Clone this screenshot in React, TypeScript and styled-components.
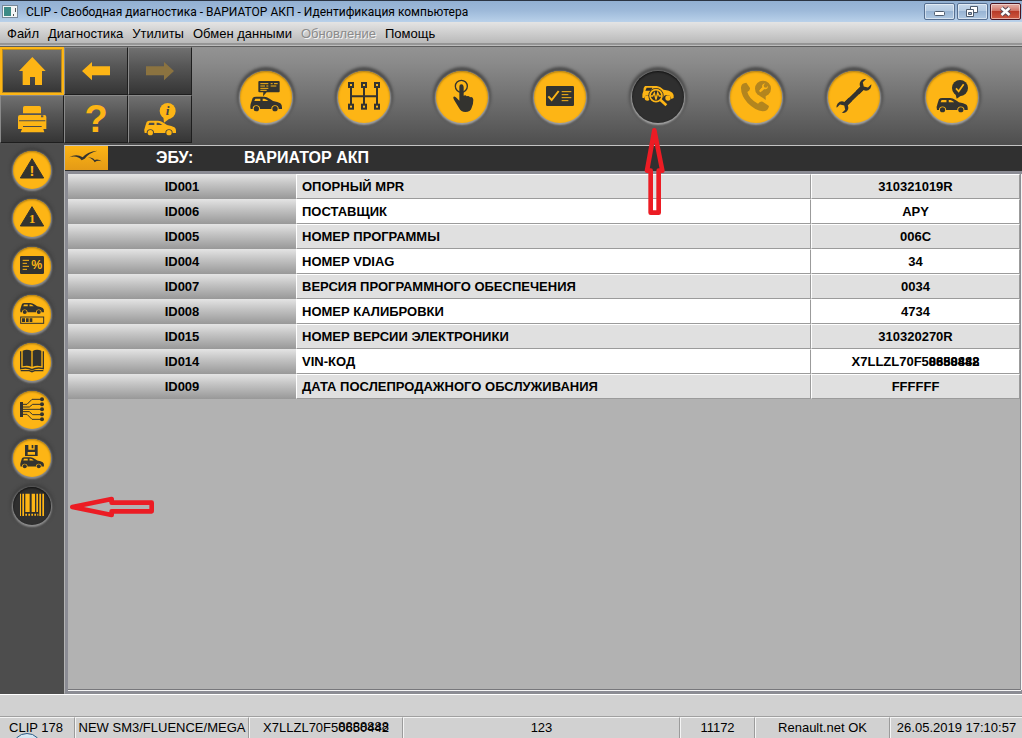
import React from "react";
import styled, { createGlobalStyle, css } from "styled-components";

const amber = "#fdb515";
const ink = "#33332f";
const sans = `"Liberation Sans", Arial, sans-serif`;

const GlobalStyle = createGlobalStyle`
  * { box-sizing: border-box; }
  body { margin: 0; font-family: ${sans}; font-size: 13px; color: #000; background: #d1d1d1; }
  button { font: inherit; color: inherit; padding: 0; margin: 0; border: 0; background: none; cursor: pointer; }
`;

/* ---------- layout ---------- */

const Window = styled.div`
  position: relative;
  display: flex;
  flex-direction: column;
  min-height: 100vh;
  overflow: hidden;
`;

const TitleBar = styled.header`
  display: flex;
  align-items: center;
  height: 22px;
  padding: 0 1px 0 2px;
  border-top: 1px solid #2b3442;
  background: linear-gradient(#92b0d2, #9db9d9 45%, #b9d1ea);
`;

const AppIcon = styled.svg`
  width: 16px;
  height: 14px;
  margin-right: 8px;
`;

const Title = styled.h1`
  flex: 1;
  margin: 0;
  font: 400 12px/20px Roboto, "Open Sans", sans-serif;
`;

const WindowButtons = styled.div`
  display: flex;
  gap: 2px;
`;

const WindowButton = styled.button<{ $close?: boolean }>`
  width: 31px;
  height: 17px;
  border: 1px solid ${(p) => (p.$close ? "#4a1420" : "#566f90")};
  border-radius: 2px;
  box-shadow: inset 0 0 0 1px rgba(255, 255, 255, 0.5);
  background: ${(p) =>
    p.$close
      ? "linear-gradient(#dfa197 0 15%, #cf6e60 48%, #b83a28 50%, #cf5a43)"
      : "linear-gradient(#c5d7ea, #b3c9e1 48%, #98b4d3 50%, #afc8e2)"};
  svg { display: block; width: 29px; height: 15px; }
`;

const MenuBar = styled.nav`
  display: flex;
  gap: 9px;
  height: 25px;
  padding: 0 7px;
  border-bottom: 1px solid #5e5e5e;
  background: linear-gradient(#e4e4e4, #b9b9b9 21px, #707070 22px, #bdbdbd 23px);
`;

const MenuItem = styled.button`
  font-size: 13px;
  line-height: 24px;
  &:disabled { color: #8b8b8b; text-shadow: 1px 1px 0 #f3f3f3; }
`;

const Toolbar = styled.div`
  display: flex;
  height: 98px;
  background: linear-gradient(#939393, #8b8b8b 15%, #4e4e4e);
`;

const ToolGrid = styled.div`
  display: grid;
  grid-template-columns: repeat(3, 64px);
  grid-template-rows: 48px 48px;
`;

const ToolButton = styled.button<{ $selected?: boolean }>`
  border: 1px solid;
  border-color: #8a8a8a #1e1e1e #1e1e1e #8a8a8a;
  background: linear-gradient(#707070, #565656 40%, #353535);
  color: ${amber};
  svg { display: block; width: 64px; height: 48px; margin: -1px; }
  ${(p) =>
    p.$selected &&
    css`
      border: 2px solid ${amber};
      box-shadow: inset 0 0 0 1px #b88a20;
      svg { margin: -2px; }
    `}
`;

const QuestionMark = styled.span`
  display: block;
  font-size: 38px;
  font-weight: 700;
  line-height: 46px;
`;

const ModeList = styled.div`
  display: flex;
  gap: 46px;
  align-items: flex-start;
  padding: 24px 0 0 48px;
`;

const RoundButton = styled.button<{ $size: number; $active?: boolean; $muted?: boolean }>`
  flex: none;
  width: ${(p) => p.$size}px;
  height: ${(p) => p.$size}px;
  border-radius: 50%;
  background: ${(p) => (p.$active ? "#2f2f2f" : amber)};
  color: ${(p) => (p.$active ? amber : p.$muted ? "#b3851e" : ink)};
  box-shadow:
    0 1px 2px 1px ${(p) => (p.$size > 45 ? "#a4a4a4" : "#8e8e8e")},
    0 -1px 3px 3px ${(p) => (p.$size > 45 ? "#4a4a4a" : "#424242")},
    inset 0 1px 2px 0 ${(p) => (p.$active ? "#111" : "#a87912")};
  svg { display: block; width: 100%; height: 100%; }
`;

const Body = styled.div`
  display: flex;
  flex: 1;
`;

const Sidebar = styled.aside`
  display: flex;
  flex-direction: column;
  align-items: center;
  gap: 10px;
  width: 64px;
  padding-top: 6px;
  background: #4d4d4d;
`;

const Panel = styled.main`
  flex: 1;
  display: flex;
  flex-direction: column;
  border-left: 1px solid #b4b4b4;
  border-top: 1px solid #c3c3c3;
  border-bottom: 1px solid #8b8c92;
  background: #8b8c94;
`;

const EcuBar = styled.div`
  display: flex;
  align-items: flex-start;
  height: 25px;
  background: #303030;
  color: #fff;
  font-size: 16px;
  font-weight: 700;
  line-height: 23px;
`;

const Brand = styled.svg`
  width: 43px;
  height: 24px;
  background: linear-gradient(${amber}, #e49a16);
`;

const EcuLabel = styled.span`
  width: 88px;
  margin-left: 48px;
`;

const Sheet = styled.div`
  flex: 1;
  margin: 3px 1px 3px 3px;
  border-right: 1px solid #8b8c92;
  border-bottom: 1px solid #77777b;
  background: #b2b2b2;
  box-shadow: 0 1px 0 #f4f4f4, 1px 0 0 #f4f4f4;
`;

const IdTable = styled.table`
  width: 100%;
  table-layout: fixed;
  border-collapse: separate;
  border-spacing: 0;
  font-weight: 700;
  line-height: 23px;
  th, td { height: 25px; padding: 0; }
`;

const CodeCell = styled.th`
  width: 228px;
  background: linear-gradient(#e4e4e4, #c4c4c4 40%, #989898);
  text-align: center;
`;

const Cell = styled.td<{ $shade: boolean; $value?: boolean }>`
  width: ${(p) => (p.$value ? "209px" : "auto")};
  border: 1px solid;
  border-color: #fff #9b9b9b #9b9b9b #fff;
  background: ${(p) => (p.$shade ? "#e0e0e0" : "#fff")};
  text-align: ${(p) => (p.$value ? "center" : "left")};
  && { padding-left: ${(p) => (p.$value ? "0" : "5px")}; }
`;

const Message = styled.div`
  height: 23px;
  border-top: 1px solid #fff;
  border-bottom: 1px solid #a0a0a0;
  background: #d1d1d1;
`;

const StatusBar = styled.footer`
  display: grid;
  grid-template-columns: 75px 174px 154px 1fr 75px 135px 132px;
  height: 21px;
  background: #d1d1d1;
`;

const StatusCell = styled.div`
  border-top: 1px solid #f4f4f4;
  border-left: 1px solid #f4f4f4;
  border-right: 1px solid #9b9b9b;
  line-height: 19px;
  text-align: center;
  white-space: nowrap;
  &:first-child { padding-right: 2px; border-left: 0; }
  &:last-child { border-right: 0; }
`;

/* ---------- overlays ---------- */

const Vin = styled.span`
  position: relative;
`;

const VinMask = styled.span<{ $lift: number }>`
  position: absolute;
  right: 0;
  top: ${(p) => -p.$lift}px;
  line-height: normal;
`;

const UpArrow = styled.svg`
  position: absolute;
  left: 643px;
  top: 126px;
  width: 24px;
  height: 90px;
`;

const LeftArrow = styled.svg`
  position: absolute;
  left: 68px;
  top: 495px;
  width: 88px;
  height: 24px;
`;

const StartOrb = styled.div`
  position: absolute;
  left: 12px;
  bottom: -25px;
  width: 30px;
  height: 30px;
  border: 1px solid #2b5b86;
  border-radius: 50%;
  background: linear-gradient(#dcebf5, #8db9da);
`;

/* ---------- drawings ---------- */

const Car = ({ x, y, s = 1 }: { x: number; y: number; s?: number }) => (
  <g transform={`translate(${x} ${y}) scale(${s})`} fill="currentColor">
    <path
      fillRule="evenodd"
      d="M8 4Q11 0 18 0H42Q50 0 60 7L69 13Q84 15 91 20Q97 24 96 37H86A11 11 0 0 0 64 37H30A11 11 0 0 0 8 37H2Q-1 27 4 16ZM16 6L13 13H31V6ZM38 6V13H55Q48 7 43 6Z"
    />
    <circle cx="19" cy="36" r="8" />
    <circle cx="75" cy="36" r="8" />
  </g>
);

const Svg = ({ box = "0 0 156 156", children }: { box?: string; children: React.ReactNode }) => (
  <svg viewBox={box} fill="currentColor" aria-hidden="true">
    {children}
  </svg>
);

const toolBox = "0 0 192 144";
const sectionBox = "3 3 114 114";

const wrenchHead = "M-7 2V20H7V2Q19-3 18-16Q17-23 11-27V-13L0-6L-11-13V-27Q-17-23-18-16Q-19-3-7 2Z";

const modes: { label: string; active?: boolean; muted?: boolean; art: React.ReactNode }[] = [
  {
    label: "Автомобиль",
    art: (
      <>
        <path d="M58 30H116Q119 30 119 33V61Q119 64 116 64H80L69 76L70 64H58Q55 64 55 61V33Q55 30 58 30Z" />
        <path d="M61 38H85M92 38H98M102 38H113M61 45H75M79 45H85M92 45H109M61 52H85M61 58H80" stroke={amber} strokeWidth="3" />
        <Car x={30} y={77} />
      </>
    ),
  },
  {
    label: "Коробка передач",
    art: (
      <>
        <path d="M39 42V107M78 42V107M117 42V107M39 76H117" stroke="currentColor" strokeWidth="6" />
        {[39, 78, 117].flatMap((x) =>
          [42, 107].map((y) => (
            <rect key={`${x}-${y}`} x={x - 6} y={y - 6} width="12" height="12" fill={amber} stroke="currentColor" strokeWidth="6" />
          )),
        )}
      </>
    ),
  },
  {
    label: "Команды",
    art: (
      <>
        <circle cx="76" cy="46" r="18" fill="none" stroke="currentColor" strokeWidth="4" />
        <path d="M70 47Q70 40 76 40T83 47V74Q89 71 92 76Q98 73 102 79Q111 76 112 86Q112 100 107 110Q103 123 88 123Q75 123 69 111L54 86Q50 79 53 77Q57 75 62 81L70 89Z" />
      </>
    ),
  },
  {
    label: "Проверки",
    art: (
      <>
        <rect x="36" y="45" width="84" height="60" rx="4" />
        <path d="M43 76L53 87L74 60" fill="none" stroke={amber} strokeWidth="6" />
        <path d="M83 62H112M83 71H103M83 80H112M83 89H103" stroke={amber} strokeWidth="3" />
      </>
    ),
  },
  {
    label: "Идентификация",
    active: true,
    art: (
      <>
        <g transform="translate(30 44)">
          <path fillRule="evenodd" d="M5 7L9 1H44Q54 2 65 12Q83 14 91 21Q97 27 95 37L88 40Q85 27 75 28Q64 28 62 40H31Q27 27 17 28Q8 29 7 38L1 36Q-1 27 4 17ZM14 6L10 15H27L31 6Z" />
          <circle cx="16" cy="37" r="8" />
          <circle cx="78" cy="37" r="8" />
        </g>
        <path d="M84 86L103 104" stroke="#2f2f2f" strokeWidth="16" />
        <circle cx="72" cy="74" r="20" fill="#2f2f2f" stroke="#2f2f2f" strokeWidth="6" />
        <circle cx="72" cy="74" r="18" fill="none" stroke="currentColor" strokeWidth="5" />
        <path d="M85 86L103 103" stroke="currentColor" strokeWidth="8" />
        <path d="M57 75H62L67 66L72 86L77 65L82 75H87" fill="none" stroke="currentColor" strokeWidth="4" />
      </>
    ),
  },
  {
    label: "Техподдержка",
    muted: true,
    art: (
      <>
        <path d="M33 49Q34 36 49 35L60 51Q61 58 52 63Q57 84 84 98Q91 90 98 92L117 105Q115 121 98 121Q76 119 53 96Q32 73 33 49Z" />
        <circle cx="99" cy="53" r="24" />
        <path d="M89 74L107 87V70Z" />
        <g transform="translate(102 49) rotate(45) scale(.5)" fill={amber}>
          <path d={wrenchHead} transform="translate(0 5)" />
          <rect x="-7" y="5" width="14" height="32" rx="6" />
        </g>
      </>
    ),
  },
  {
    label: "Ремонт",
    art: (
      <>
        <path d="M52 100L104 50" stroke="currentColor" strokeWidth="13" />
        <path d={wrenchHead} transform="translate(103 51) rotate(45)" />
        <path d={wrenchHead} transform="translate(53 99) rotate(225)" />
      </>
    ),
  },
  {
    label: "Готовность",
    art: (
      <>
        <circle cx="102" cy="51" r="24" />
        <path d="M88 67L92 83L108 72Z" />
        <path d="M90 52L98 61L113 40" fill="none" stroke={amber} strokeWidth="5" />
        <Car x={31} y={81} s={0.98} />
      </>
    ),
  },
];

const Warning = ({ sign, serif }: { sign: string; serif?: boolean }) => (
  <>
    <path d="M60 26L95 84H25Z" stroke="currentColor" strokeWidth="3" strokeLinejoin="round" />
    <text
      x="60"
      y={serif ? 76 : 77}
      fill={amber}
      textAnchor="middle"
      fontSize={serif ? 40 : 44}
      fontWeight="700"
      fontFamily={serif ? "Liberation Serif" : "Liberation Sans"}
    >
      {sign}
    </text>
  </>
);

const sections: { label: string; active?: boolean; art: React.ReactNode }[] = [
  { label: "Неисправности", art: <Warning sign="!" /> },
  { label: "Сведения", art: <Warning sign="1" serif /> },
  {
    label: "Параметры",
    art: (
      <>
        <rect x="24" y="30" width="72" height="54" rx="4" />
        <path d="M32 43H51M32 52H45M32 61H51M32 70H45" stroke={amber} strokeWidth="3" />
        <text x="74" y="70" fill={amber} textAnchor="middle" fontSize="37" fontWeight="700" fontFamily="Liberation Sans">%</text>
      </>
    ),
  },
  {
    label: "Состояние",
    art: (
      <>
        <Car x={24} y={27} s={0.75} />
        <rect x="26" y="69" width="69" height="19" fill="none" stroke="currentColor" strokeWidth="3" />
        <path d="M30 73H39V84H30ZM42 73H50V84H42ZM53 73H61V84H53Z" />
      </>
    ),
  },
  {
    label: "Документация",
    art: (
      <>
        <path d="M32 26Q46 20 58 27V74Q46 69 32 73ZM62 27Q74 20 88 26V73Q74 69 62 74Z" />
        <path d="M26 28V80Q46 75 60 83Q74 75 94 80V28M26 86H52L60 89L68 86H94" fill="none" stroke="currentColor" strokeWidth="4" />
      </>
    ),
  },
  {
    label: "Схемы",
    art: (
      <>
        <rect x="24" y="36" width="9" height="45" />
        <path d="M33 43H45L60 28H90M33 51H52L62 43H90M33 58H90M33 65H52L62 74H90M33 73H45L60 88H90" fill="none" stroke="currentColor" strokeWidth="3" />
        {[28, 43, 58, 73, 88].map((y) => <circle key={y} cx="90" cy={y} r="6" />)}
      </>
    ),
  },
  {
    label: "Сохранение",
    art: (
      <>
        <path fillRule="evenodd" d="M39 21H49V35H68V21H77V54H39ZM47 42V50H69V42ZM59 21H64V31H59Z" />
        <Car x={24} y={58} s={0.75} />
      </>
    ),
  },
  {
    label: "Идентификация ЭБУ",
    active: true,
    art: (
      <>
        <path d="M24 23H27V90H24ZM31 23H36V90H31ZM40 23H53V78H40ZM59 23H69V78H59ZM73 23H78V78H73ZM82 23H87V90H82ZM91 23H96V90H91Z" />
        <path d="M40 86H79" stroke="currentColor" strokeWidth="6" strokeDasharray="5 4" />
      </>
    ),
  },
];

const rows: [string, string, React.ReactNode][] = [
  ["ID001", "ОПОРНЫЙ MPR", "310321019R"],
  ["ID006", "ПОСТАВЩИК", "APY"],
  ["ID005", "НОМЕР ПРОГРАММЫ", "006C"],
  ["ID004", "НОМЕР VDIAG", "34"],
  ["ID007", "ВЕРСИЯ ПРОГРАММНОГО ОБЕСПЕЧЕНИЯ", "0034"],
  ["ID008", "НОМЕР КАЛИБРОВКИ", "4734"],
  ["ID015", "НОМЕР ВЕРСИИ ЭЛЕКТРОНИКИ", "310320270R"],
  ["ID014", "VIN-КОД", <Vin key="vin">X7LLZL70F50650442<VinMask $lift={0}>8888888</VinMask></Vin>],
  ["ID009", "ДАТА ПОСЛЕПРОДАЖНОГО ОБСЛУЖИВАНИЯ", "FFFFFF"],
];

const menu = ["Файл", "Диагностика", "Утилиты", "Обмен данными", "Обновление", "Помощь"];

export default function App() {
  return (
    <Window>
      <GlobalStyle />
      <TitleBar>
        <AppIcon viewBox="0 0 16 14" aria-hidden="true">
          <rect x=".5" y=".5" width="15" height="12" fill="#f2f5f5" stroke="#788898" />
          <path d="M2 2H9V11H2Z" fill="#3d8a86" />
          <path d="M11 9h1v2h-1zM13 3h1v4h-1z" fill="#555" />
        </AppIcon>
        <Title>CLIP - Свободная диагностика - ВАРИАТОР АКП - Идентификация компьютера</Title>
        <WindowButtons>
          <WindowButton aria-label="Свернуть">
            <svg viewBox="0 0 29 15"><rect x="9.500" y="7.500" width="10" height="4" rx="1" fill="#fff" stroke="#4d5b6d" /></svg>
          </WindowButton>
          <WindowButton aria-label="Восстановить">
            <svg viewBox="0 0 29 15" fill="#fff" stroke="#4d5b6d">
              <path d="M12.500 2.500H19.500V8.500H12.500Z" />
              <path d="M8.500 5.500H15.500V12.500H8.500Z" />
              <path d="M10.500 8.500H13.500V10.500H10.500Z" fill="#9bb5d3" />
            </svg>
          </WindowButton>
          <WindowButton $close aria-label="Закрыть">
            <svg viewBox="0 0 29 15">
              <path d="M10.500 4L18.500 11M18.500 4L10.500 11" stroke="#5b4a55" strokeWidth="4.500" />
              <path d="M10.500 4L18.500 11M18.500 4L10.500 11" stroke="#fff" strokeWidth="2.500" />
            </svg>
          </WindowButton>
        </WindowButtons>
      </TitleBar>

      <MenuBar>
        {menu.map((item) => (
          <MenuItem key={item} disabled={item === "Обновление"}>{item}</MenuItem>
        ))}
      </MenuBar>

      <Toolbar>
        <ToolGrid>
          <ToolButton $selected aria-label="Главная">
            <Svg box={toolBox}><path d="M97 30L137 72H126V114H105V90H90V114H68V72H57Z" /></Svg>
          </ToolButton>
          <ToolButton aria-label="Назад">
            <Svg box={toolBox}><path d="M54 72L84 45V58H138V85H84V100Z" /></Svg>
          </ToolButton>
          <ToolButton aria-label="Вперёд" disabled>
            <Svg box={toolBox}><path d="M138 72L108 45V58H54V85H108V100Z" fill="#8b7340" /></Svg>
          </ToolButton>
          <ToolButton aria-label="Печать">
            <Svg box={toolBox}>
              <path d="M74 33H118Q123 33 123 38V55H69V38Q69 33 74 33Z" />
              <path fillRule="evenodd" d="M60 60H133Q139 60 139 66V102H130L133 112H62L66 102H54V66Q54 60 60 60ZM57 76V79H136V76ZM123 61V67H130V61ZM69 93V96H125V93Z" />
            </Svg>
          </ToolButton>
          <ToolButton aria-label="Справка"><QuestionMark>?</QuestionMark></ToolButton>
          <ToolButton aria-label="Сведения об автомобиле">
            <Svg box={toolBox}>
              <circle cx="119" cy="48" r="24" />
              <path d="M106 66L108 83L127 69Z" />
              <text x="119" y="61" fill="#444" textAnchor="middle" fontFamily="Liberation Serif" fontStyle="italic" fontWeight="700" fontSize="40">i</text>
              <Car x={48} y={77} />
            </Svg>
          </ToolButton>
        </ToolGrid>
        <ModeList>
          {modes.map((m) => (
            <RoundButton key={m.label} $size={52} $active={m.active} $muted={m.muted} aria-label={m.label}>
              <Svg>{m.art}</Svg>
            </RoundButton>
          ))}
        </ModeList>
      </Toolbar>

      <Body>
        <Sidebar>
          {sections.map((s) => (
            <RoundButton key={s.label} $size={38} $active={s.active} aria-label={s.label}>
              <Svg box={sectionBox}>{s.art}</Svg>
            </RoundButton>
          ))}
        </Sidebar>
        <Panel>
          <EcuBar>
            <Brand viewBox="0 0 129 72" aria-hidden="true">
              <path d="M13 34Q34 22 53 34Q65 17 97 14Q70 22 59 38L50 43Q37 27 13 34ZM69 34Q83 34 89 42Q99 38 110 46Q98 42 89 49Q83 38 69 34Z" fill={ink} />
            </Brand>
            <EcuLabel>ЭБУ:</EcuLabel>
            <span>ВАРИАТОР АКП</span>
          </EcuBar>
          <Sheet>
            <IdTable>
              <tbody>
                {rows.map(([code, name, value], i) => (
                  <tr key={code}>
                    <CodeCell scope="row">{code}</CodeCell>
                    <Cell $shade={i % 2 === 0}>{name}</Cell>
                    <Cell $shade={i % 2 === 0} $value>{value}</Cell>
                  </tr>
                ))}
              </tbody>
            </IdTable>
          </Sheet>
        </Panel>
      </Body>

      <Message />
      <StatusBar>
        <StatusCell>CLIP 178</StatusCell>
        <StatusCell>NEW SM3/FLUENCE/MEGA</StatusCell>
        <StatusCell><Vin>X7LLZL70F50650442<VinMask $lift={1}>8888888</VinMask></Vin></StatusCell>
        <StatusCell>123</StatusCell>
        <StatusCell>11172</StatusCell>
        <StatusCell>Renault.net OK</StatusCell>
        <StatusCell>26.05.2019 17:10:57</StatusCell>
      </StatusBar>

      <UpArrow viewBox="0 0 72 270" fill="none" stroke="#ec1c24" strokeWidth="14" strokeLinejoin="round" aria-hidden="true">
        <path d="M34 13L12 134H23V260H47V134H58Z" />
      </UpArrow>
      <LeftArrow viewBox="0 0 264 72" fill="none" stroke="#ec1c24" strokeWidth="14" strokeLinejoin="round" aria-hidden="true">
        <path d="M13 36L131 12V23H251V49H131V60Z" />
      </LeftArrow>
      <StartOrb />
    </Window>
  );
}
